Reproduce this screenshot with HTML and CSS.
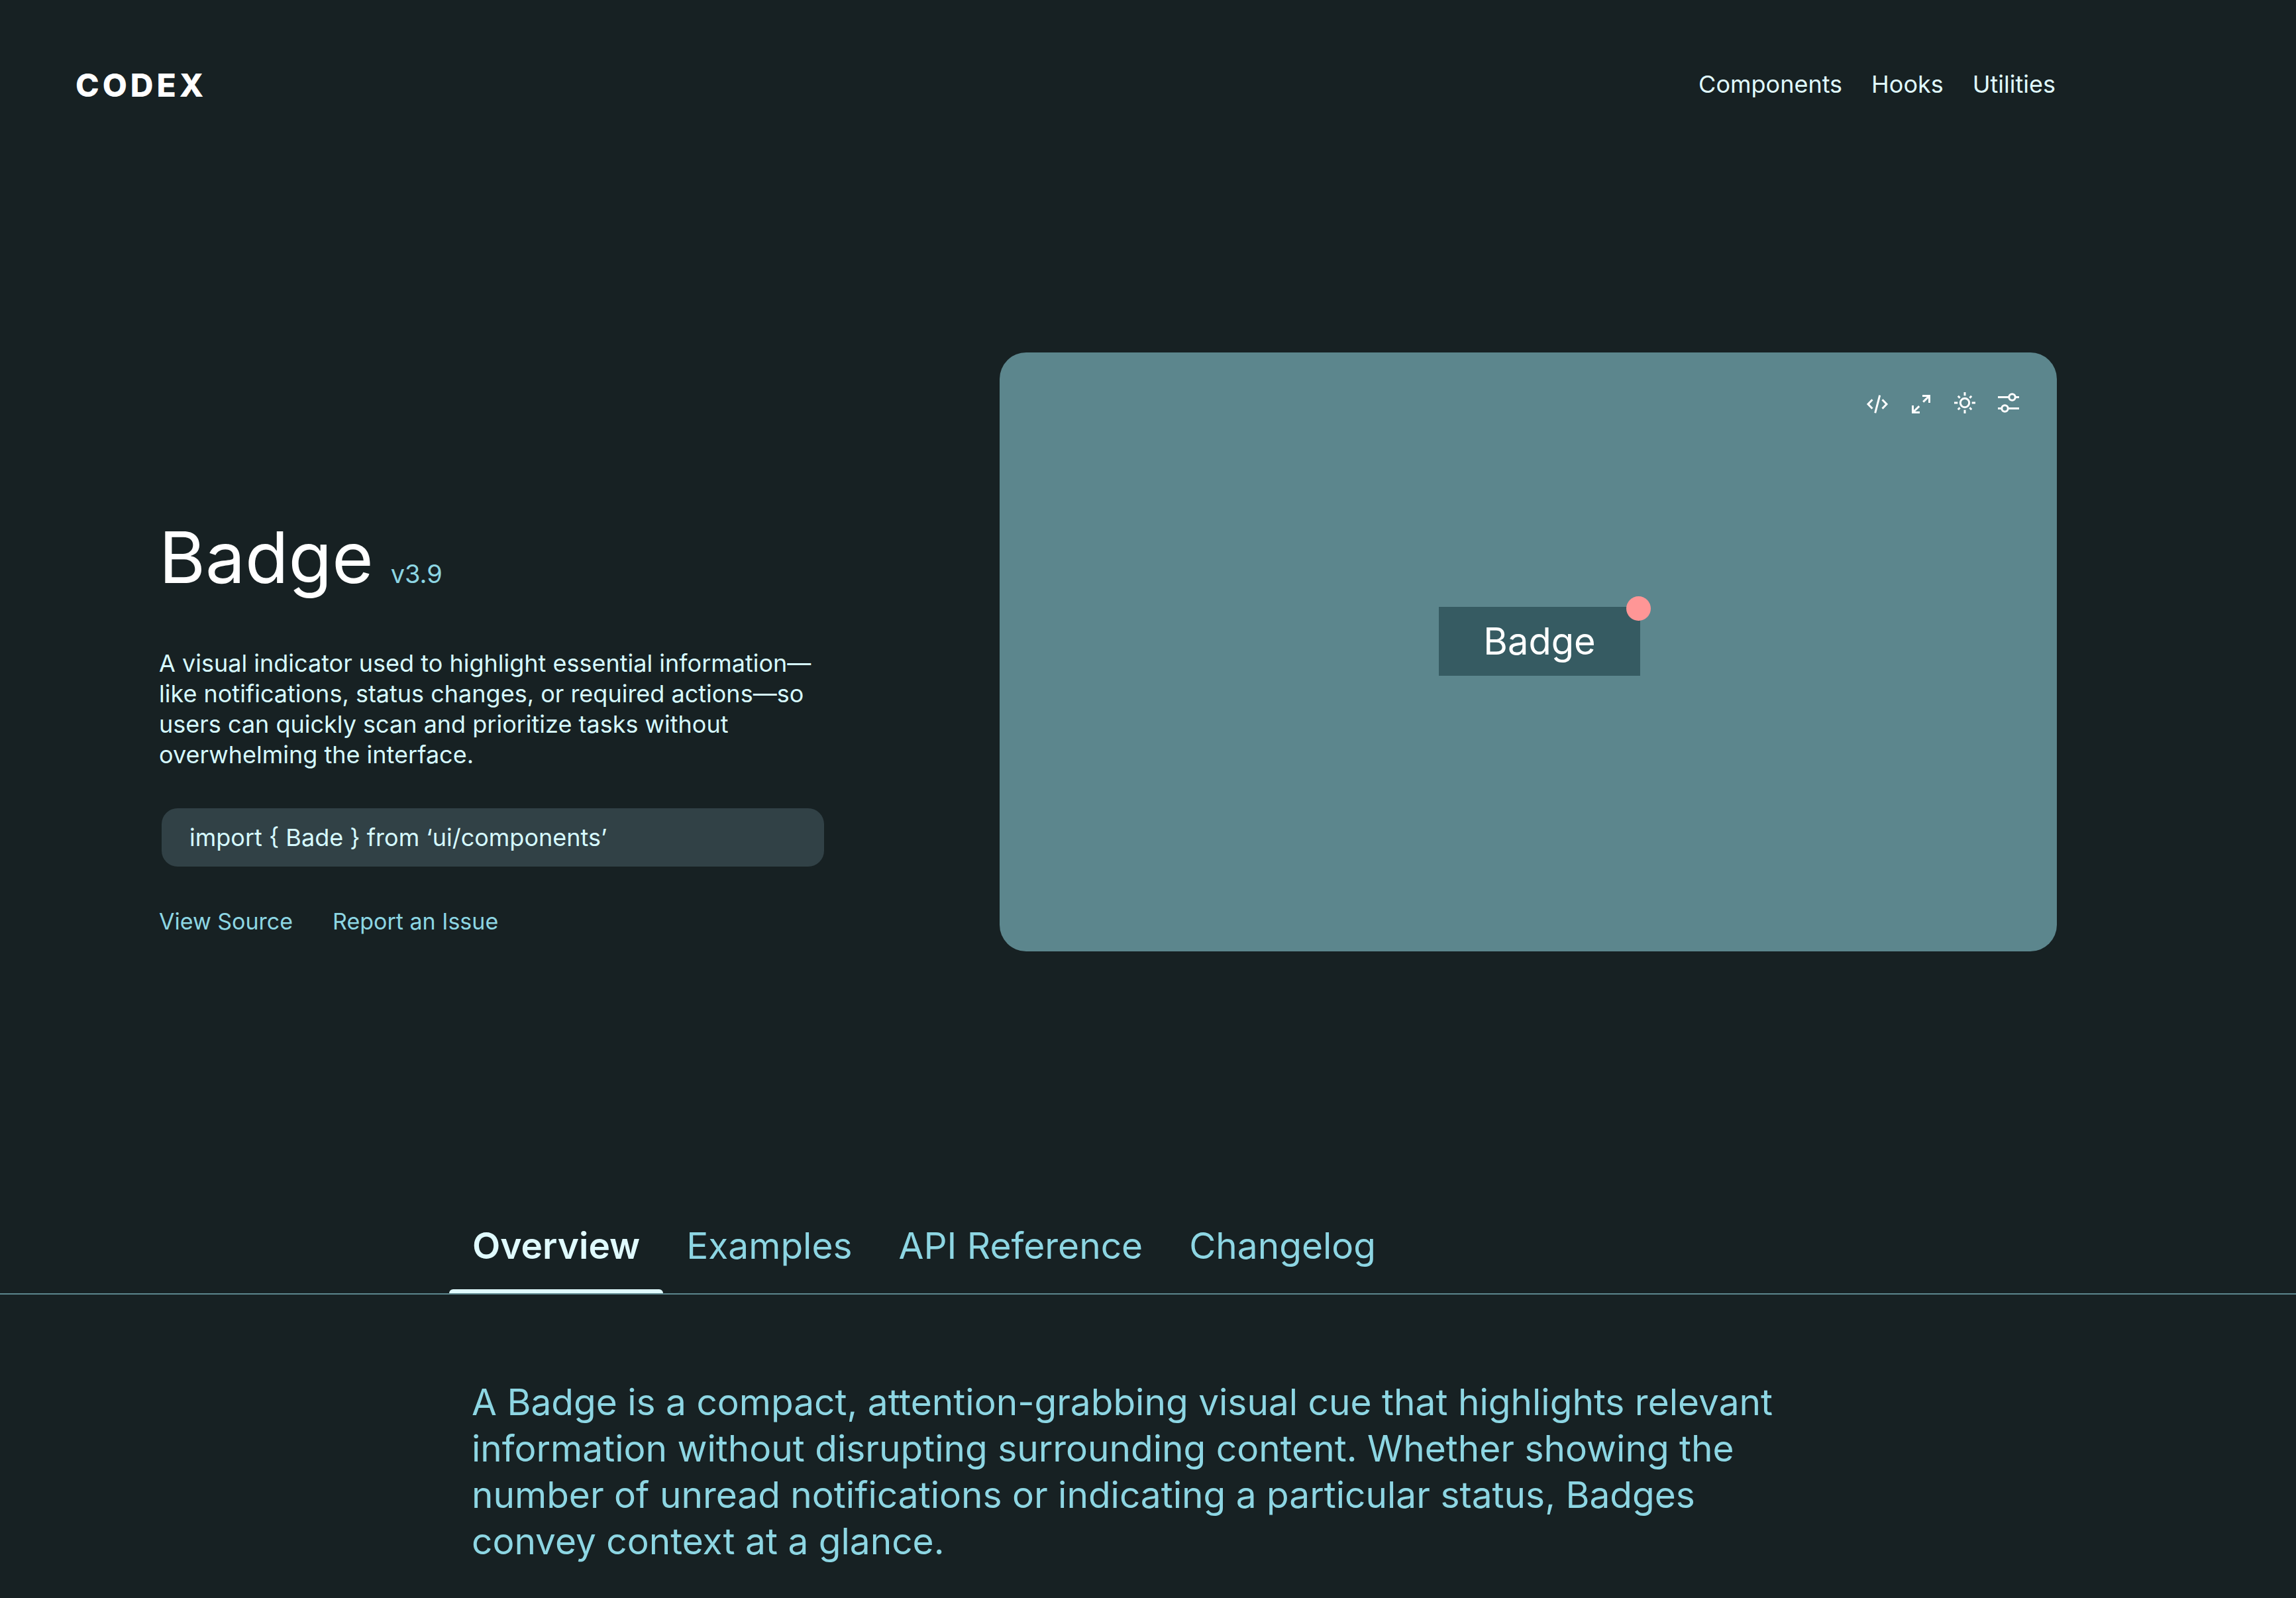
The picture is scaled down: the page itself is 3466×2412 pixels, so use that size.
FILE: index.html
```html
<!DOCTYPE html>
<html lang="en">
<head>
<meta charset="utf-8">
<meta name="viewport" content="width=device-width, initial-scale=1">
<title>Badge – Codex</title>
<link rel="stylesheet" href="styles.css">
</head>
<body>
<header class="site-header">
  <a class="logo" href="#">CODEX</a>
  <nav class="site-nav" aria-label="Main">
    <a href="#">Components</a>
    <a href="#">Hooks</a>
    <a href="#">Utilities</a>
  </nav>
</header>
<main>
  <section class="hero">
    <div class="intro">
      <div class="title-row">
        <h1 class="title">Badge</h1>
        <span class="version">v3.9</span>
      </div>
      <p class="summary">A visual indicator used to highlight essential information—like notifications, status changes, or required actions—so users can quickly scan and prioritize tasks without overwhelming the interface.</p>
      <input class="import-line" type="text" readonly aria-label="Import statement" value="import { Bade } from ‘ui/components’">
      <div class="links">
        <a href="#">View Source</a>
        <a href="#">Report an Issue</a>
      </div>
    </div>
    <div class="preview">
      <div class="toolbar">
        <button type="button" class="tool" aria-label="Show code">
          <svg viewBox="0 0 36 36"><path d="M10.5 13.2 4 20l6.5 6.8M25.5 13.2 32 20l-6.5 6.8M21.7 6.7l-7 26.6"/></svg>
        </button>
        <button type="button" class="tool" aria-label="Expand">
          <svg viewBox="0 0 36 36"><path d="M20 7.5h10.5V18M30.5 7.5l-9.3 9.1M5.5 22v10.5H16M5.5 32.5l9.7-9.3"/></svg>
        </button>
        <button type="button" class="tool" aria-label="Toggle theme">
          <svg viewBox="0 0 36 36"><circle cx="18" cy="18" r="6.7"/><path d="M18 2v5.3M18 28.7V34M2 18h5.3M28.7 18H34M7.8 7.8l2.8 2.8M25.4 25.4l2.8 2.8M7.8 28.2l2.8-2.8M25.4 10.6l2.8-2.8"/></svg>
        </button>
        <button type="button" class="tool" aria-label="Settings">
          <svg viewBox="0 0 36 36"><circle cx="23.5" cy="9.5" r="4.7"/><circle cx="12.5" cy="26.5" r="4.7"/><path d="M2 9.5h16.8M28.2 9.5H34M2 26.5h5.8M17.2 26.5H34"/></svg>
        </button>
      </div>
      <div class="stage">
        <div class="badge">Badge<span class="dot"></span></div>
      </div>
    </div>
  </section>
  <div class="tabs" role="tablist">
    <button type="button" class="tab active" role="tab" aria-selected="true" id="tab-overview" aria-controls="overview">Overview</button>
    <button type="button" class="tab" role="tab" aria-selected="false">Examples</button>
    <button type="button" class="tab" role="tab" aria-selected="false">API Reference</button>
    <button type="button" class="tab" role="tab" aria-selected="false">Changelog</button>
  </div>
  <section class="overview" id="overview" role="tabpanel" aria-labelledby="tab-overview">
    <p>A Badge is a compact, attention-grabbing visual cue that highlights relevant information without disrupting surrounding content. Whether showing the number of unread notifications or indicating a particular status, Badges convey context at a glance.</p>
  </section>
</main>
</body>
</html>
```
FILE: styles.css
```css
:root {
  --bg: #172123;
  --accent: #8dd6e3;
  --light: #e0fbff;
  --line: #5c868d;
}

* { box-sizing: border-box; }

body {
  margin: 0;
  background: var(--bg);
  color: var(--light);
  font: 36px/46px Inter, "Liberation Sans", sans-serif;
}

h1, p { margin: 0; font-weight: 400; }
a { color: inherit; text-decoration: none; }

button, input {
  margin: 0;
  padding: 0;
  border: 0;
  background: none;
  color: inherit;
  font: inherit;
}

.site-header {
  display: flex;
  justify-content: space-between;
  align-items: center;
  padding: 100px 363px 0 114px;
}

.logo {
  color: #fff;
  font-size: 48px;
  line-height: 58px;
  font-weight: 800;
  letter-spacing: 5px;
}

.site-nav {
  display: flex;
  gap: 44px;
  padding-bottom: 4px;
}

.hero {
  display: grid;
  grid-template-columns: minmax(0, 1269fr) minmax(0, 1596fr);
  align-items: end;
  margin-top: 374px;
  padding: 0 361px 0 240px;
}

.intro { padding-bottom: 22px; }

.title-row {
  display: flex;
  align-items: baseline;
  gap: 26px;
}

.title {
  color: #fff;
  font-size: 107px;
  line-height: 120px;
}

.version {
  color: var(--accent);
  font-size: 38px;
}

.summary {
  max-width: 1004px;
  margin-top: 77px;
}

.import-line {
  display: block;
  width: 100%;
  max-width: 1000px;
  height: 88px;
  margin: 58px 0 60px 4px;
  padding: 0 42px;
  border-radius: 24px;
  background: #314146;
}

.summary, .import-line { color: #d6faff; }

.links {
  display: flex;
  gap: 60px;
  color: var(--accent);
  font-size: 34px;
}

.preview {
  display: grid;
  aspect-ratio: 1596 / 904;
  border-radius: 40px;
  background: var(--line);
  color: #fff;
}

.preview > * { grid-area: 1 / 1; }

.toolbar {
  display: flex;
  gap: 30px;
  place-self: start end;
  padding: 58px 55px 0 0;
}

.tool { width: 36px; height: 36px; }

.tool svg {
  display: block;
  fill: none;
  stroke: currentColor;
  stroke-width: 3;
}

.stage { place-self: center; margin: -32px 0 0 34px; }

.badge {
  position: relative;
  padding: 17px 67px;
  background: #365b62;
  font-size: 56px;
  line-height: 70px;
}

.dot {
  position: absolute;
  top: -16px;
  right: -16px;
  width: 37px;
  height: 37px;
  border-radius: 50%;
  background: #ff9696;
}

.tabs {
  display: flex;
  margin-top: 409px;
  padding-left: 678px;
  border-bottom: 2px solid var(--line);
}

.tab {
  padding: 0 35px 37px;
  color: var(--accent);
  font-size: 55px;
  line-height: 70px;
}

.tab.active {
  position: relative;
  color: var(--light);
  font-weight: 600;
}

.tab.active::after {
  content: "";
  position: absolute;
  inset: auto 0 0;
  height: 6px;
  border-radius: 6px 6px 0 0;
  background: var(--light);
}

.overview {
  max-width: 2724px;
  padding: 127px 0 50px 712px;
  color: var(--accent);
  font-size: 55px;
  line-height: 70px;
}
```
